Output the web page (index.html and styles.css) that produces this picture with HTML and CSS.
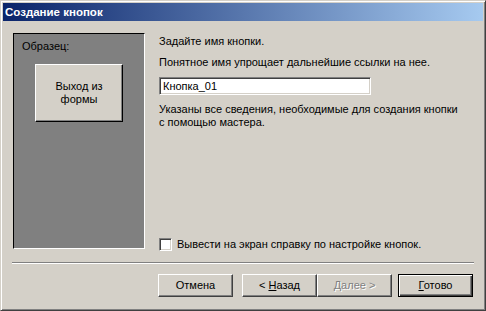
FILE: index.html
```html
<!DOCTYPE html>
<html lang="ru">
<head>
<meta charset="utf-8">
<title>Создание кнопок</title>
<link rel="stylesheet" href="styles.css">
</head>
<body>
<div class="window">
  <div class="titlebar">Создание кнопок</div>
  <div class="client">
    <div class="main">
      <div class="panel">
        <div class="panel-label">Образец:</div>
        <div class="preview-btn"><span>Выход из<br>формы</span></div>
      </div>
      <div class="right">
        <p class="t1">Задайте имя кнопки.</p>
        <p class="t2">Понятное имя упрощает дальнейшие ссылки на нее.</p>
        <div class="input">Кнопка_01</div>
        <p class="t3">Указаны все сведения, необходимые для создания кнопки<br>с помощью мастера.</p>
        <label class="check"><span class="box"></span><span>Вывести на экран справку по настройке кнопок.</span></label>
      </div>
    </div>
    <div class="sep"></div>
    <div class="buttons">
      <div class="btn"><span>Отмена</span></div>
      <div class="btn btn-gap"><span>&lt; <u>Н</u>азад</span></div>
      <div class="btn disabled"><span><u>Д</u>алее &gt;</span></div>
      <div class="btn default"><span><u>Г</u>отово</span></div>
    </div>
  </div>
</div>
</body>
</html>
```

FILE: styles.css
```css
html, body {
  margin: 0;
  padding: 0;
  background: #d4d0c8;
}
body {
  font-family: "Liberation Sans", Arial, sans-serif;
  font-size: 11px;
  line-height: 13px;
  color: #000;
}
.window {
  width: 486px;
  height: 311px;
  box-sizing: border-box;
  border: 1px solid;
  border-color: #d4d0c8 #404040 #404040 #d4d0c8;
  box-shadow: inset 1px 1px #fff, inset -1px -1px #808080;
  padding: 2px;
  display: flex;
  flex-direction: column;
}
.titlebar {
  height: 18px;
  line-height: 18px;
  padding-left: 2px;
  font-weight: bold;
  font-size: 11.5px;
  color: #fff;
  background: linear-gradient(to right, #0a246a, #a6caf0);
}
.client {
  flex: 1;
  display: flex;
  flex-direction: column;
}
.main {
  display: flex;
  height: 218px;
  margin-top: 12px;
  padding-left: 10px;
}
.panel {
  width: 132px;
  height: 216px;
  box-sizing: border-box;
  align-self: flex-start;
  background: #808080;
  border: 1px solid;
  border-color: #000 #fff #fff #000;
  padding: 6px 0 0 8px;
}
.panel-label {
  margin-bottom: 11px;
}
.preview-btn {
  width: 88px;
  height: 58px;
  box-sizing: border-box;
  margin-left: 13px;
  background: #d4d0c8;
  border: 1px solid;
  border-color: #fff #000 #000 #fff;
  box-shadow: inset -1px -1px #808080;
  display: flex;
  align-items: center;
  justify-content: center;
  text-align: center;
}
.right {
  margin-left: 14px;
  display: flex;
  flex-direction: column;
  align-items: flex-start;
}
.right p {
  margin: 0;
}
.t1 { margin-top: 2px !important; }
.t2 { margin-top: 8px !important; }
.input {
  margin-top: 8px;
  width: 212px;
  height: 18px;
  box-sizing: border-box;
  background: #fff;
  border: 1px solid;
  border-color: #808080 #fff #fff #808080;
  box-shadow: inset 1px 1px #404040, inset -1px -1px #d4d0c8;
  padding: 2px 3px 0 3px;
  line-height: 13px;
}
.t3 { margin-top: 8px !important; }
.check {
  margin-top: auto;
  display: flex;
  align-items: center;
  gap: 5px;
}
.box {
  width: 13px;
  height: 13px;
  box-sizing: border-box;
  background: #fff;
  border: 1px solid;
  border-color: #808080 #fff #fff #808080;
  box-shadow: inset 1px 1px #404040, inset -1px -1px #d4d0c8;
}
.sep {
  margin: 11px 9px 0 9px;
  height: 1px;
  background: #808080;
  border-bottom: 1px solid #fff;
}
.buttons {
  display: flex;
  justify-content: flex-end;
  margin-top: 10px;
  padding-right: 10px;
}
.btn {
  width: 75px;
  height: 23px;
  box-sizing: border-box;
  background: #d4d0c8;
  border: 1px solid;
  border-color: #fff #404040 #404040 #fff;
  box-shadow: inset -1px -1px #808080;
  display: flex;
  align-items: center;
  justify-content: center;
  white-space: pre;
}
.btn-gap {
  margin-left: 9px;
}
.btn.disabled {
  color: #808080;
  text-shadow: 1px 1px #fff;
}
.btn.default {
  margin-left: 6px;
  border: 1px solid #000;
  box-shadow: inset 1px 1px #fff, inset -1px -1px #404040, inset -2px -2px #808080;
}
u {
  text-decoration: underline;
  text-underline-offset: 1px;
}
```
